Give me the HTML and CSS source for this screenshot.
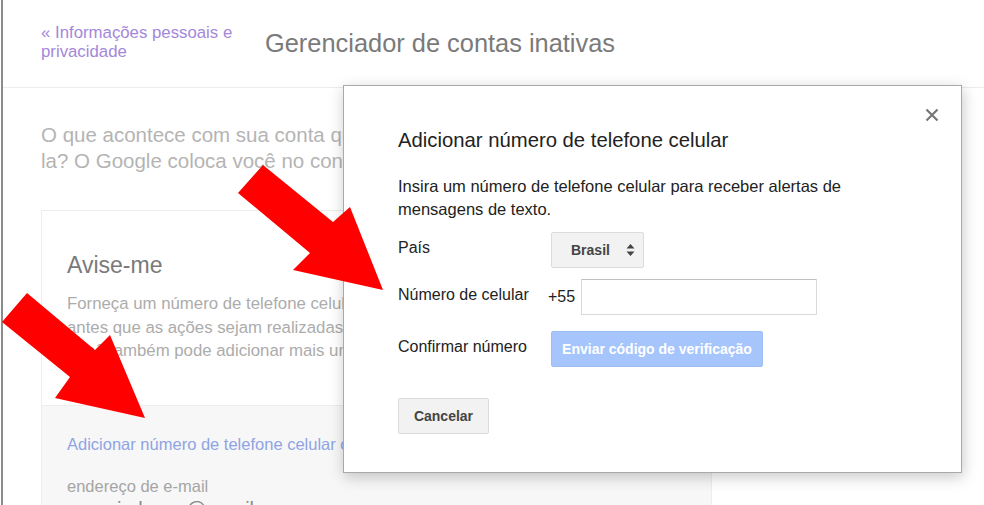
FILE: index.html
```html
<!DOCTYPE html>
<html>
<head>
    <title>Gerenciador de contas inativas</title>
    <link rel="stylesheet" href="styles.css">
</head>
<body>
    <div id="page">
        <div id="header">
            <a class="back-link" href="#">&laquo; Informações pessoais e privacidade</a>
            <h1 class="page-title">Gerenciador de contas inativas</h1>
        </div>
        <div id="content">
            <p class="intro">O que acontece com sua conta quando você não puder mais usá-<br>la? O Google coloca você no controle.</p>
            <div class="card">
                <div class="card-body">
                    <h2 class="card-title">Avise-me</h2>
                    <p class="card-text">Forneça um número de telefone celular e um endereço de e-mail<br>antes que as ações sejam realizadas em sua conta.<br>Você também pode adicionar mais um endereço de e-mail.</p>
                </div>
                <div class="card-foot">
                    <a class="add-link" href="#">Adicionar número de telefone celular opcional</a>
                    <div class="field-label">endereço de e-mail</div>
                    <div class="field-value">usuario.lopes@gmail.com</div>
                </div>
            </div>
        </div>
    </div>

    <div id="dialog">
        <svg class="close" width="14" height="14" viewBox="0 0 14 14">
            <path d="M1.5 1.5 L12.5 12.5 M12.5 1.5 L1.5 12.5" stroke="#777" stroke-width="2.2" fill="none"/>
        </svg>
        <h3 class="dialog-title">Adicionar número de telefone celular</h3>
        <p class="dialog-text">Insira um número de telefone celular para receber alertas de mensagens de texto.</p>
        <div class="row row-country">
            <span class="label">País</span>
            <span class="select">Brasil
                <svg width="9" height="14" viewBox="0 0 9 14">
                    <path d="M4.5 1 L8.5 5.5 L0.5 5.5 Z M4.5 13 L8.5 8.5 L0.5 8.5 Z" fill="#444"/>
                </svg>
            </span>
        </div>
        <div class="row row-phone">
            <span class="label">Número de celular</span>
            <span class="prefix">+55</span>
            <input class="phone" type="text">
        </div>
        <div class="row row-confirm">
            <span class="label">Confirmar número</span>
            <button class="btn btn-blue">Enviar código de verificação</button>
        </div>
        <button class="btn btn-gray">Cancelar</button>
    </div>

    <svg id="arrows" width="984" height="505" viewBox="0 0 984 505">
        <polygon points="263,165 333,222 350,207 383,290 293,270 310,253 238,193" fill="#ff0000"/>
        <polygon points="27,293 95,350 110,335 145,418 55,398 70,377 2,322" fill="#ff0000"/>
    </svg>
</body>
</html>
```

FILE: styles.css
```css
html, body {
    margin: 0;
    padding: 0;
    height: 100%;
    overflow: hidden;
    background-color: #fff;
    font-family: "Liberation Sans", Arial, sans-serif;
}
#page {
    height: 100%;
    overflow: hidden;
    margin-left: 1px;
    border-left: 2px solid #8c8c8c;
}
#header {
    display: flex;
    align-items: flex-start;
    height: 87px;
    border-bottom: 1px solid #ececec;
}
.back-link {
    width: 200px;
    margin: 23px 0 0 38px;
    font-size: 16.8px;
    line-height: 19px;
    color: #a487da;
    text-decoration: none;
}
.page-title {
    margin: 29px 0 0 24px;
    font-size: 25.4px;
    font-weight: normal;
    line-height: 28px;
    color: #7a7a7a;
}
#content {
    padding: 0 0 0 38px;
}
.intro {
    margin: 34px 0 0 0;
    font-size: 20.5px;
    line-height: 26px;
    color: #b4b4b4;
    white-space: nowrap;
}
.card {
    width: 669px;
    margin-top: 36px;
    border: 1px solid #ededed;
}
.card-body {
    padding: 40px 25px 42px 25px;
}
.card-title {
    margin: 0;
    font-size: 23px;
    font-weight: normal;
    line-height: 28px;
    color: #7a7a7a;
}
.card-text {
    margin: 13px 0 0 0;
    font-size: 16.8px;
    line-height: 23.5px;
    color: #acacac;
    white-space: nowrap;
}
.card-foot {
    padding: 28px 25px 20px 25px;
    background-color: #f7f7f7;
    border-top: 1px solid #ececec;
}
.add-link {
    display: block;
    font-size: 16.5px;
    line-height: 20px;
    color: #8ea4e4;
    text-decoration: none;
    white-space: nowrap;
}
.field-label {
    margin-top: 22px;
    font-size: 16.5px;
    line-height: 20px;
    color: #a5a5a5;
}
.field-value {
    margin-top: 1px;
    font-size: 20px;
    line-height: 24px;
    color: #8a8a8a;
}

#dialog {
    position: absolute;
    left: 343px;
    top: 85px;
    width: 563px;
    height: 386px;
    padding: 0 0 0 54px;
    background-color: #fff;
    border: 1px solid #a9a9a9;
    box-shadow: 1px 4px 14px rgba(0,0,0,0.22);
    color: #222;
}
.close {
    position: absolute;
    right: 22px;
    top: 22px;
}
.dialog-title {
    margin: 42px 0 0 0;
    font-size: 20.3px;
    font-weight: normal;
    line-height: 24px;
}
.dialog-text {
    width: 480px;
    margin: 23px 0 0 0;
    font-size: 16.5px;
    line-height: 23px;
}
.row {
    display: flex;
    align-items: flex-start;
}
.label {
    width: 150px;
    font-size: 16px;
    line-height: 20px;
    padding-top: 6px;
}
.row-country {
    margin-top: 11px;
}
.row-phone {
    margin-top: 11px;
}
.row-confirm {
    margin-top: 16px;
}
.select {
    display: flex;
    align-items: center;
    gap: 16px;
    box-sizing: border-box;
    height: 36px;
    margin-left: 3px;
    padding: 0 8px 0 19px;
    background-color: #f2f2f2;
    border: 1px solid #dcdcdc;
    border-radius: 2px;
    font-size: 14px;
    font-weight: bold;
    color: #444;
}
.prefix {
    font-size: 16px;
    line-height: 20px;
    padding-top: 8px;
    margin-right: 6px;
}
.phone {
    box-sizing: border-box;
    width: 236px;
    height: 36px;
    margin: 0;
    border: 1px solid #d9d9d9;
    border-top-color: #c0c0c0;
    border-radius: 1px;
    outline: none;
}
.btn {
    box-sizing: border-box;
    height: 36px;
    border-radius: 2px;
    font-family: "Liberation Sans", Arial, sans-serif;
    font-size: 14px;
    font-weight: bold;
}
.btn-blue {
    width: 212px;
    margin-left: 3px;
    background-color: #a5c5fc;
    border: 1px solid #9dbff8;
    color: #fff;
}
.btn-gray {
    display: block;
    width: 91px;
    margin-top: 31px;
    background-color: #f2f2f2;
    border: 1px solid #dcdcdc;
    color: #444;
}
#arrows {
    position: absolute;
    left: 0;
    top: 0;
    pointer-events: none;
}
```
